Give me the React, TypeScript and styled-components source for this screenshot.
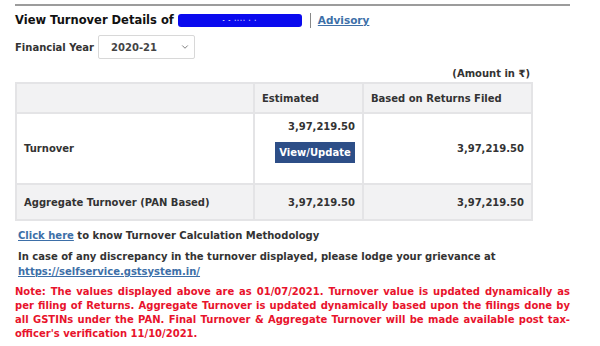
import styled, { createGlobalStyle } from "styled-components";
import { ChevronDown } from "lucide-react";

const GlobalStyle = createGlobalStyle`
  body {
    margin: 0;
    background: #ffffff;
    font-family: "DejaVu Sans", Verdana, sans-serif;
    font-weight: bold;
    color: #222222;
  }
`;

const Page = styled.div`
  width: 600px;
  height: 346px;
  padding: 4px 30px 0 15px;
  box-sizing: border-box;
  overflow: hidden;
  font-size: 10px;
`;

const TopRule = styled.div`
  height: 2px;
  background: #9c9c9c;
`;

const TitleRow = styled.div`
  display: flex;
  align-items: center;
  height: 22px;
  margin-top: 3px;
  font-size: 10.5px;
`;

const Title = styled.h3`
  margin: 0;
  font-size: 11.5px;
  font-weight: bold;
  color: #111111;
`;

const Redacted = styled.span`
  display: inline-flex;
  align-items: center;
  justify-content: center;
  width: 124px;
  height: 13px;
  margin-left: 4px;
  background: #0a0aee;
  border-radius: 3px;
  color: #ffffff;
  font-size: 5px;
  letter-spacing: 1px;
`;

const Divider = styled.span`
  width: 1px;
  height: 15px;
  margin: 0 7px 0 8px;
  background: #888888;
`;

const Link = styled.a`
  color: #3d6fa8;
  font-size: inherit;
  text-decoration: underline;
  cursor: pointer;
`;

const YearRow = styled.div`
  display: flex;
  align-items: center;
  gap: 4px;
  margin-top: 4px;
  color: #333333;
`;

const Select = styled.div`
  display: flex;
  align-items: center;
  justify-content: space-between;
  width: 97px;
  height: 24px;
  box-sizing: border-box;
  padding: 0 4px 0 12px;
  border: 1px solid #d8d8d8;
  border-radius: 2px;
  color: #444444;
`;

const AmountNote = styled.div`
  width: 515px;
  text-align: right;
  line-height: 12px;
  color: #333333;
  margin-top: 9px;
`;

const Table = styled.table`
  width: 516px;
  margin-top: 2px;
  border-collapse: collapse;
  font-size: 10px;
  color: #333333;
  table-layout: fixed;
`;

const Row = styled.tr<{ $shaded?: boolean }>`
  background: ${(p) => (p.$shaded ? "#f2f2f3" : "#ffffff")};
`;

const Cell = styled.td<{ $align?: string; $height: number }>`
  border: 2px solid #e4e4e6;
  padding: 0 7px;
  height: ${(p) => p.$height}px;
  text-align: ${(p) => p.$align ?? "left"};
  vertical-align: middle;
  box-sizing: border-box;
`;

const Stack = styled.div`
  display: flex;
  flex-direction: column;
  align-items: flex-end;
  gap: 9px;
  margin-top: -13px;
  line-height: 12px;
`;

const Button = styled.button`
  width: 80px;
  height: 21px;
  border: none;
  background: #2d4e87;
  color: #ffffff;
  font-family: inherit;
  font-weight: bold;
  font-size: 10px;
  padding: 0;
`;

const Info = styled.p<{ $gap: number }>`
  margin: ${(p) => p.$gap}px 0 0;
  padding-left: 3px;
  line-height: 15px;
  color: #333333;
`;

const Note = styled.p`
  margin: 6px 0 0;
  line-height: 14px;
  color: #e8132c;
  text-align: justify;
  width: 555px;
`;

const App = () => {
  return (
    <>
      <GlobalStyle />
      <Page>
        <TopRule />
        <TitleRow>
          <Title>View Turnover Details of</Title>
          <Redacted>- - ···· · ·</Redacted>
          <Divider />
          <Link>Advisory</Link>
        </TitleRow>
        <YearRow>
          <span>Financial Year</span>
          <Select>
            <span>2020-21</span>
            <ChevronDown size={10} color="#666" strokeWidth={2} />
          </Select>
        </YearRow>
        <AmountNote>(Amount in ₹)</AmountNote>
        <Table>
          <colgroup>
            <col style={{ width: 238 }} />
            <col style={{ width: 109 }} />
            <col style={{ width: 169 }} />
          </colgroup>
          <tbody>
            <Row $shaded>
              <Cell $height={30} />
              <Cell $height={30}>Estimated</Cell>
              <Cell $height={30}>Based on Returns Filed</Cell>
            </Row>
            <Row>
              <Cell $height={71}>Turnover</Cell>
              <Cell $height={71} $align="right">
                <Stack>
                  <span>3,97,219.50</span>
                  <Button>View/Update</Button>
                </Stack>
              </Cell>
              <Cell $height={71} $align="right">
                3,97,219.50
              </Cell>
            </Row>
            <Row $shaded>
              <Cell $height={36}>Aggregate Turnover (PAN Based)</Cell>
              <Cell $height={36} $align="right">
                3,97,219.50
              </Cell>
              <Cell $height={36} $align="right">
                3,97,219.50
              </Cell>
            </Row>
          </tbody>
        </Table>
        <Info $gap={7}>
          <Link>Click here</Link> to know Turnover Calculation Methodology
        </Info>
        <Info $gap={6}>
          In case of any discrepancy in the turnover displayed, please lodge
          your grievance at
          <br />
          <Link>https://selfservice.gstsystem.in/</Link>
        </Info>
        <Note>
          Note: The values displayed above are as 01/07/2021. Turnover value is
          updated dynamically as per filing of Returns. Aggregate Turnover is
          updated dynamically based upon the filings done by all GSTINs under
          the PAN. Final Turnover &amp; Aggregate Turnover will be made
          available post tax-officer's verification 11/10/2021.
        </Note>
      </Page>
    </>
  );
};

export default App;
